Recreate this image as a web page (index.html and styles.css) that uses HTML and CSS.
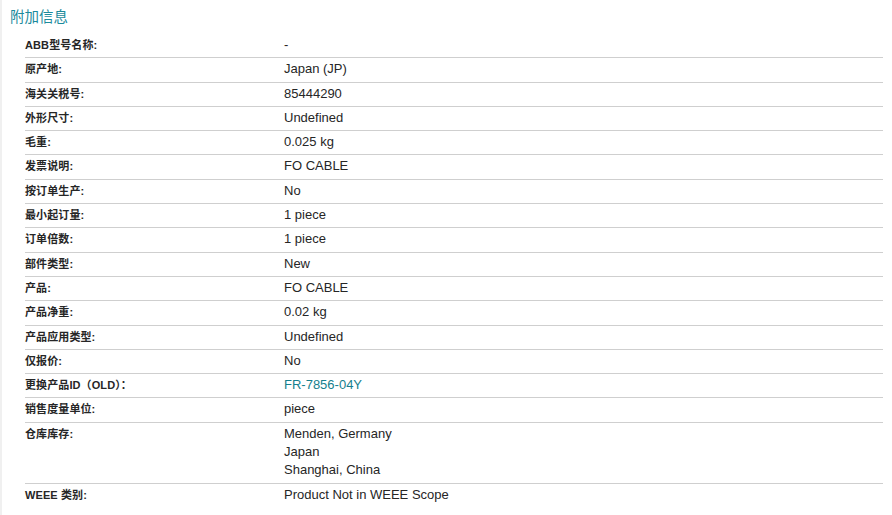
FILE: index.html
```html
<!DOCTYPE html>
<html lang="zh">
<head>
<meta charset="utf-8">
<link rel="stylesheet" href="styles.css">
</head>
<body>
<div class="page">
  <h2 class="title">附加信息</h2>
  <div class="table">
    <div class="row"><div class="label">ABB型号名称:</div><div class="value">-</div></div>
    <div class="row"><div class="label">原产地:</div><div class="value">Japan (JP)</div></div>
    <div class="row"><div class="label">海关关税号:</div><div class="value">85444290</div></div>
    <div class="row"><div class="label">外形尺寸:</div><div class="value">Undefined</div></div>
    <div class="row"><div class="label">毛重:</div><div class="value">0.025 kg</div></div>
    <div class="row"><div class="label">发票说明:</div><div class="value">FO CABLE</div></div>
    <div class="row"><div class="label">按订单生产:</div><div class="value">No</div></div>
    <div class="row"><div class="label">最小起订量:</div><div class="value">1 piece</div></div>
    <div class="row"><div class="label">订单倍数:</div><div class="value">1 piece</div></div>
    <div class="row"><div class="label">部件类型:</div><div class="value">New</div></div>
    <div class="row"><div class="label">产品:</div><div class="value">FO CABLE</div></div>
    <div class="row"><div class="label">产品净重:</div><div class="value">0.02 kg</div></div>
    <div class="row"><div class="label">产品应用类型:</div><div class="value">Undefined</div></div>
    <div class="row"><div class="label">仅报价:</div><div class="value">No</div></div>
    <div class="row"><div class="label">更换产品ID（OLD）：</div><div class="value"><a class="link" href="#">FR-7856-04Y</a></div></div>
    <div class="row"><div class="label">销售度量单位:</div><div class="value">piece</div></div>
    <div class="row"><div class="label">仓库库存:</div><div class="value">Menden, Germany<br>Japan<br>Shanghai, China</div></div>
    <div class="row"><div class="label">WEEE 类别:</div><div class="value">Product Not in WEEE Scope</div></div>
  </div>
</div>
</body>
</html>
```

FILE: styles.css
```css
html, body {
  margin: 0;
  padding: 0;
  background: #ffffff;
}
body {
  font-family: "Liberation Sans", Arial, "Noto Sans CJK SC", sans-serif;
  color: #262626;
}
.page {
  border-left: 2px solid #f0f0f0;
  min-height: 515px;
  box-sizing: border-box;
  padding: 7px 9px 0 8px;
}
.title {
  margin: 0;
  font-family: "Liberation Sans", Arial, "Noto Sans CJK SC", sans-serif;
  font-weight: normal;
  font-size: 14.5px;
  line-height: 20px;
  color: #1b8a9c;
  height: 26px;
}
.table {
  margin-left: 15px;
}
.row {
  display: grid;
  grid-template-columns: 259px 1fr;
  border-top: 1px solid #cfcfcf;
  padding: 2px 0 3px;
}
.row:first-child {
  border-top: 1px solid transparent;
}
.label {
  font-size: 11px;
  font-weight: bold;
  line-height: 18.3px;
  color: #262626;
  letter-spacing: 0.1px;
}
.value {
  font-size: 13px;
  line-height: 18.3px;
  color: #262626;
}
.link {
  color: #167f8e;
  text-decoration: none;
}
```
